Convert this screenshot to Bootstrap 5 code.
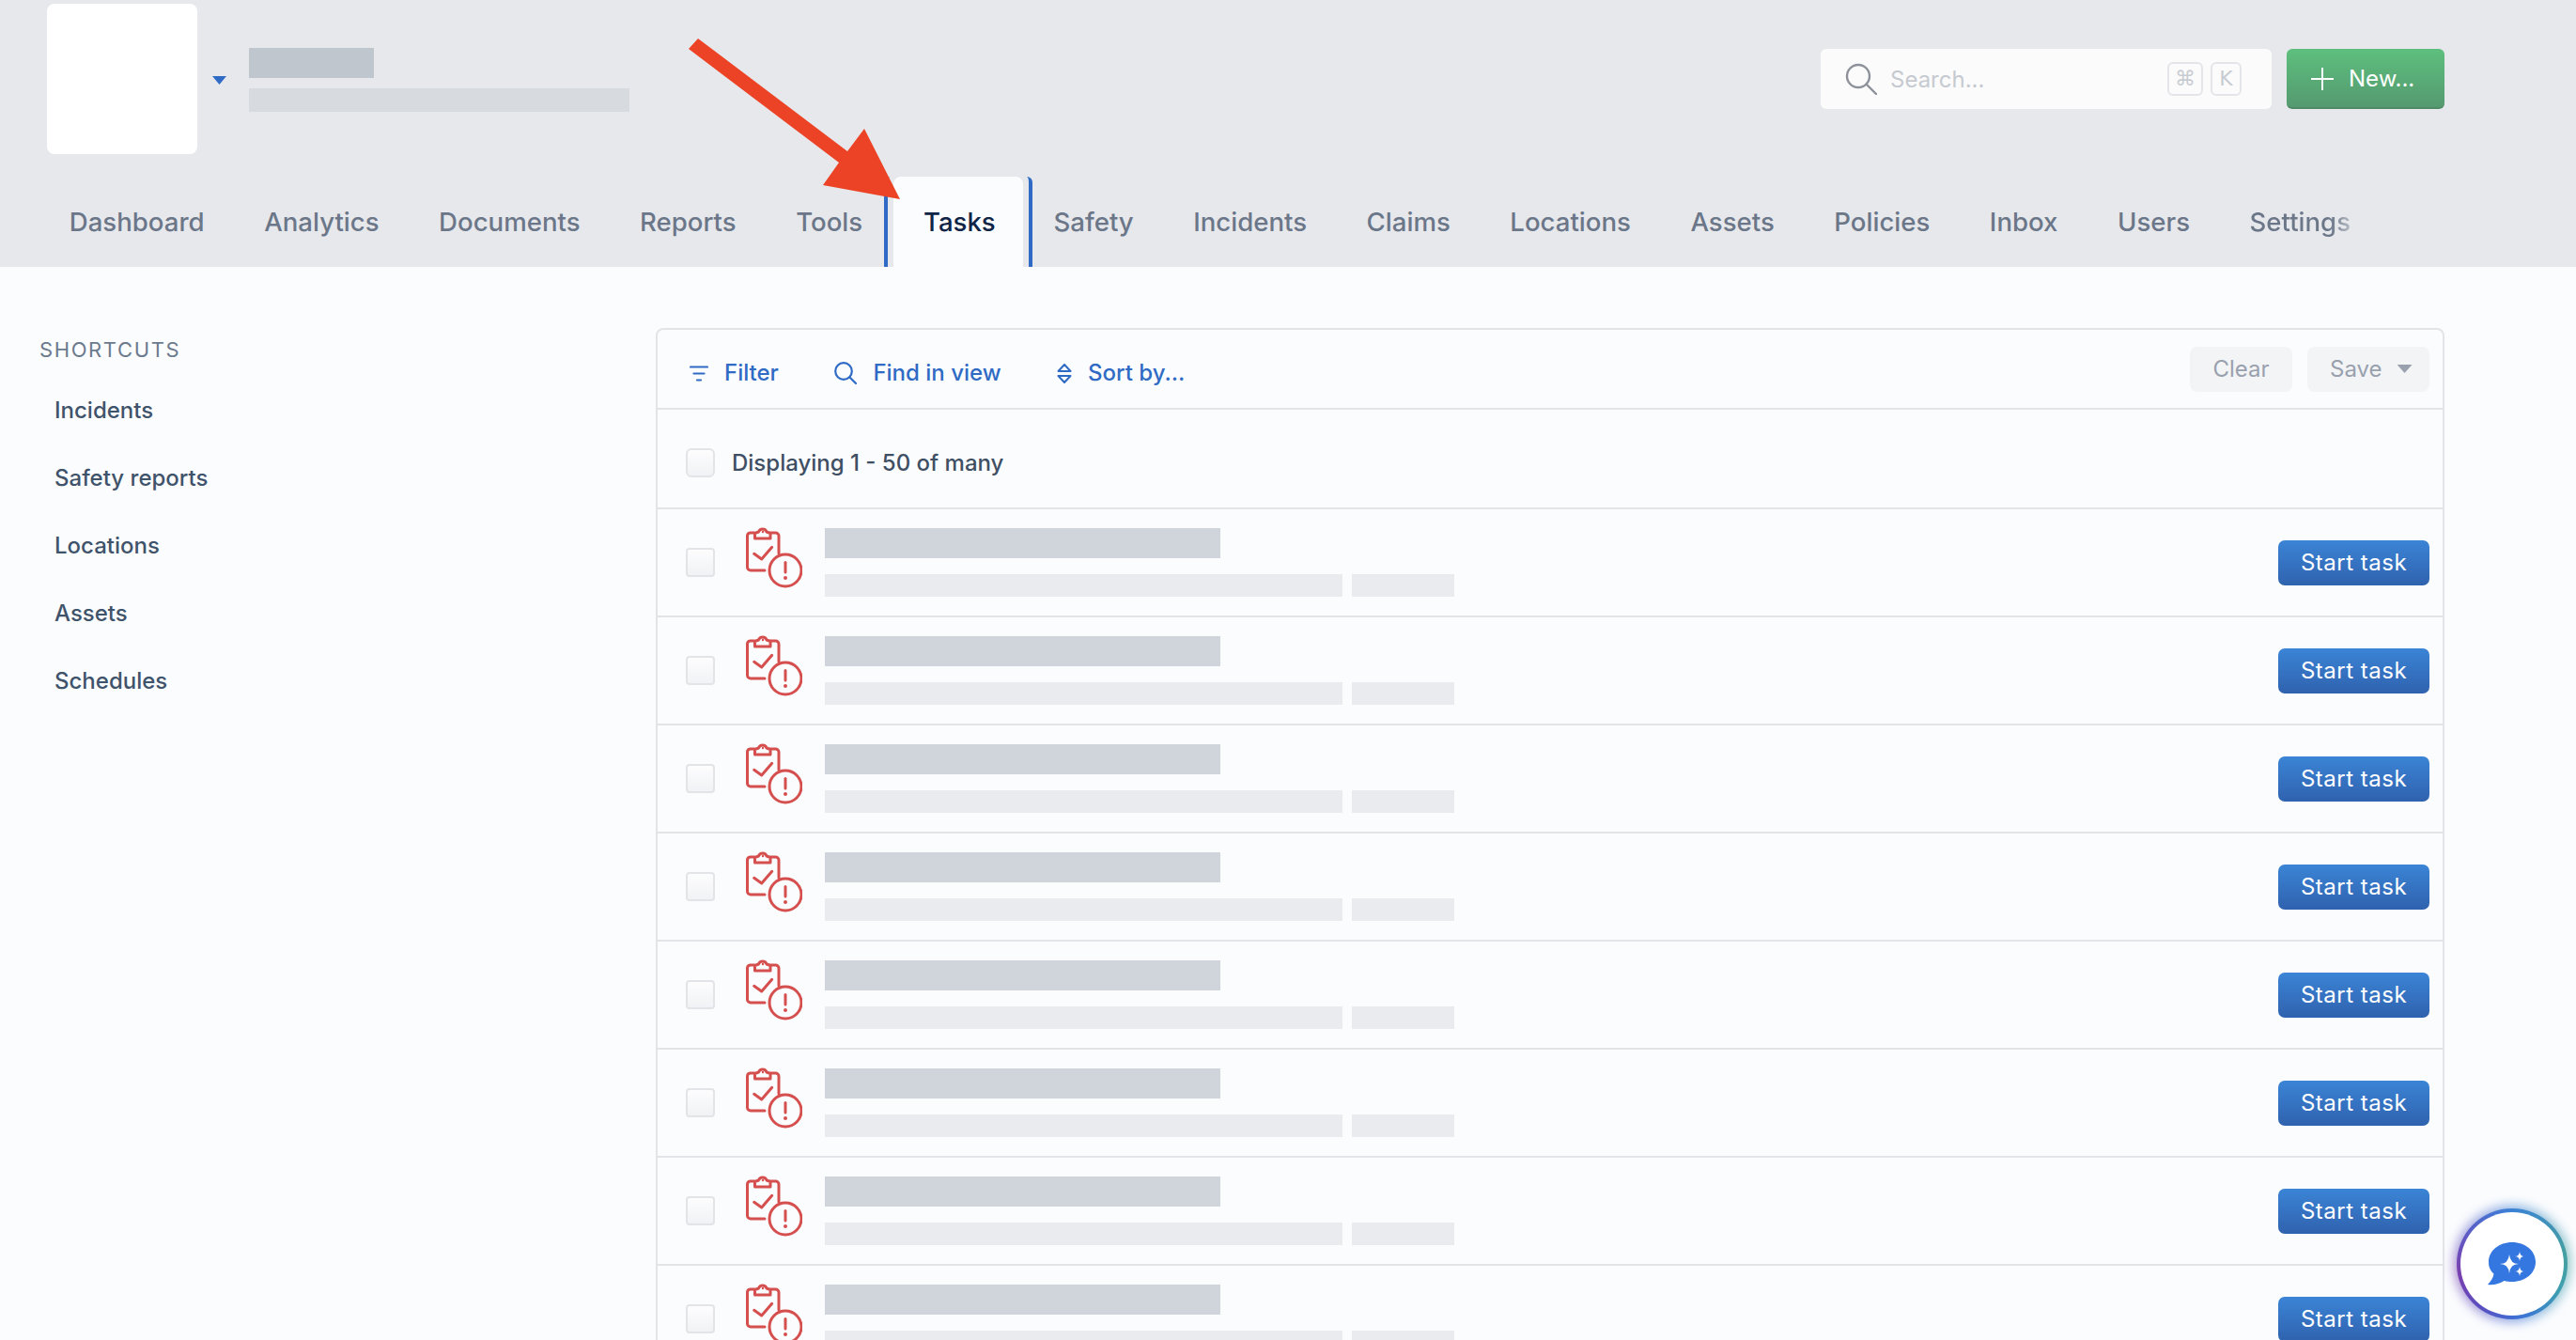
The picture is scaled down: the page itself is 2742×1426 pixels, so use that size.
<!DOCTYPE html>
<html lang="en">
<head>
  <meta charset="UTF-8" />
  <meta name="viewport" content="width=device-width, initial-scale=1" />
  <title>Tasks</title>
  <link href="https://cdn.jsdelivr.net/npm/bootstrap@5.3.0/dist/css/bootstrap.min.css" rel="stylesheet" />
  <style>
    html, body { height: 100%; overflow: hidden; }
    body { background: #fbfcfe; font-family: Inter, "Liberation Sans", sans-serif; color: #3f536b; }

    /* header */
    .top-head { background: #e7e8ec; height: 284px; }
    .brand-row { height: 164px; padding: 4px 140px 0 50px; }
    .logo-box { width: 160px; height: 160px; background: #fff; border-radius: 8px; }
    .logo-caret { width: 15px; height: 9px; margin: 77px 24px 0 16px; background: #2f6bc4; clip-path: polygon(0 0, 100% 0, 50% 100%); }
    .name-stack { padding-top: 47px; }
    .name-bar { width: 133px; height: 32px; background: #bfc6ce; }
    .sub-bar { width: 405px; height: 25px; margin-top: 11px; background: #d7dade; }
    .search-top { margin-top: 48px; }
    .search-box { width: 480px; height: 64px; background: #fbfbfc; border-radius: 6px; padding: 0 32px 0 26px; color: #c6cad0; font-size: 24px; }
    .search-txt { margin: 2px 0 0 14px; }
    .key-cap { height: 36px; min-width: 33px; padding: 0 6px; border: 2px solid #e4e5e8; border-radius: 6px; font-size: 22px; line-height: 32px; text-align: center; font-family: "DejaVu Sans", sans-serif; color: #c8ccd2; }
    .new-btn { width: 168px; height: 64px; margin-left: 16px; padding: 2px 0 0 26px; background: linear-gradient(#5dbf7d, #559a70); border: 0; border-bottom: 2px solid #4d8a65; border-radius: 6px; color: #fff; font-size: 24px; }
    .new-btn:hover { color: #fff; }

    /* tabs */
    .tab-strip { margin: 24px 0 0 43px; height: 96px; gap: 2px; }
    .tab-item { padding: 0 30.75px; font-size: 27.6px; font-weight: 500; line-height: 96px; color: #6b7789; position: relative; text-decoration: none; white-space: nowrap; }
    .tab-item.on { padding: 0 29px 0 32px; background: #fbfcfe; color: #0f2447; border-radius: 8px 8px 0 0; }
    .tab-item.on::before { content: ""; position: absolute; inset: 0 -10px; border: solid #2f6bc4; border-width: 0 4px; border-radius: 6px 6px 0 0; }
    .tab-fade span { background: linear-gradient(90deg, #6b7789 80%, #b7bcc4); -webkit-background-clip: text; background-clip: text; color: transparent; }

    .red-arrow { position: absolute; left: 0; top: 0; width: 1000px; height: 240px; pointer-events: none; }

    /* sidebar */
    .side-col { width: 698px; flex: none; padding: 8px 0 0 42px; }
    .side-label { font-size: 22px; line-height: 30px; letter-spacing: 1.6px; color: #6b7a8d; margin-bottom: 14px; }
    .side-link { padding: 0 0 0 16px; height: 72px; line-height: 72px; font-size: 24px; font-weight: 500; color: #3f536b; text-decoration: none; background: none; border: 0; }

    /* panel */
    .page-body { padding-top: 65px; }
    .task-panel { width: 1904px; flex: none; background: #fbfcfe; border: 2px solid #e2e4e8; border-radius: 8px 8px 0 0; }
    .tool-row { height: 85px; padding: 0 14px 0 34px; border-bottom: 2px solid #e2e4e8; }
    .tool-left { padding-top: 9px; gap: 59.5px; }
    .tool-btn { padding: 0; border: 0; font-size: 24px; font-weight: 500; color: #2f6bc4; gap: 17px; }
    .tool-btn:hover { color: #2f6bc4; }
    .grey-btn { height: 48px; padding: 0; border: 0; border-radius: 8px; background: #f3f4f6; color: #99a1ae; font-size: 24px; }
    .grey-btn:hover { background: #f3f4f6; color: #99a1ae; }
    .clear-btn { width: 109px; }
    .save-btn { width: 130px; padding-left: 24px; }
    .save-caret { width: 16px; height: 9px; margin-left: 16px; background: #99a1ae; clip-path: polygon(0 0, 100% 0, 50% 100%); }
    .count-row { height: 106px; padding: 9px 0 0 30px; border-bottom: 2px solid #e2e4e8; font-size: 24px; font-weight: 500; color: #3f4f63; }
    .pick { width: 31px; height: 31px; margin: 0 18px 0 0; flex: none; border: 2px solid #e2e4e8; border-radius: 6px; background: linear-gradient(#fdfdfe, #f1f2f5); }
    .task-row { height: 115px; padding: 0 14px 0 30px; border: 0; border-bottom: 2px solid #e2e4e8; border-radius: 0; background: none; }
    .task-ic { width: 60px; height: 66px; margin: 0 24px 12px 15px; flex: none; }
    .bar-a { width: 421px; height: 32px; background: #d0d5dc; }
    .bar-b { width: 551px; height: 24px; background: #e9ebee; }
    .bar-c { width: 109px; height: 24px; margin-left: 2px; background: #e9ebee; }
    .bar-wrap { gap: 17px; }
    .start-btn { width: 161px; height: 48px; padding: 1px 0 0; border: 0; border-radius: 7px; background: linear-gradient(#3b84d6, #2f62ae); color: #fff; font-size: 24px; letter-spacing: .5px; }
    .start-btn:hover { color: #fff; }

    /* chat bubble */
    .chat-btn { position: fixed; left: 2615px; top: 1286px; width: 118px; height: 118px; padding: 4px; border: 0; border-radius: 50%; background: conic-gradient(from 0deg, #3b82d6 0deg, #45a0a0 80deg, #3f9fb0 120deg, #3b74d6 170deg, #5a4fc0 215deg, #7a3fb0 260deg, #5a60c8 310deg, #3b82d6 360deg); }
    .chat-btn::before { content: ""; position: absolute; inset: -3px; border-radius: 50%; background: inherit; filter: blur(6px); opacity: .6; z-index: -1; }
    .chat-in { background: #fff; border-radius: 50%; width: 100%; height: 100%; }
  </style>
</head>
<body>

  <svg width="0" height="0" class="position-absolute">
    <symbol id="clip-alert" viewBox="0 0 60 66">
      <g fill="none" stroke="#d64f4f" stroke-width="3" stroke-linecap="round" stroke-linejoin="round">
        <path d="M9 7H4.500A3.500 3.500 0 0 0 1.500 10.500V43.500A3.500 3.500 0 0 0 5 47H20" />
        <path d="M26 7h5.500A3.500 3.500 0 0 1 35 10.500V29" />
        <path d="M9.500 13V7.500l4-1.500a4.500 4.500 0 0 1 8.500 0l4 1.500V13Z" />
        <path d="M8.700 29.300 16.700 35 27.700 22.300" />
        <circle cx="42" cy="47" r="17" />
        <path d="M42 38.500V49" />
      </g>
      <circle cx="42" cy="55" r="2" fill="#d64f4f" />
      <circle cx="18" cy="6" r="1.200" fill="#d64f4f" />
    </symbol>
  </svg>

  <header class="top-head">
    <div class="brand-row d-flex">
      <div class="logo-box"></div>
      <div class="logo-caret"></div>
      <div class="name-stack">
        <div class="name-bar"></div>
        <div class="sub-bar"></div>
      </div>
      <div class="search-top ms-auto d-flex align-items-start">
        <div class="search-box d-flex align-items-center">
          <svg width="34" height="34" viewBox="0 0 34 34" fill="none" stroke="#8d9199" stroke-width="2.400" stroke-linecap="round"><circle cx="14" cy="14" r="12" /><path d="M23 23 33 33" /></svg>
          <span class="search-txt flex-grow-1">Search...</span>
          <span class="key-cap">⌘</span>
          <span class="key-cap ms-2">K</span>
        </div>
        <button class="btn new-btn d-flex align-items-center" type="button">
          <svg width="24" height="24" viewBox="0 0 24 24" stroke="#fff" stroke-width="2"><path d="M12 0V24M0 12H24" /></svg>
          <span class="ms-3">New...</span>
        </button>
      </div>
    </div>
    <nav class="tab-strip d-flex">
      <a class="tab-item" href="#">Dashboard</a>
      <a class="tab-item" href="#">Analytics</a>
      <a class="tab-item" href="#">Documents</a>
      <a class="tab-item" href="#">Reports</a>
      <a class="tab-item" href="#">Tools</a>
      <a class="tab-item on" href="#">Tasks</a>
      <a class="tab-item" href="#">Safety</a>
      <a class="tab-item" href="#">Incidents</a>
      <a class="tab-item" href="#">Claims</a>
      <a class="tab-item" href="#">Locations</a>
      <a class="tab-item" href="#">Assets</a>
      <a class="tab-item" href="#">Policies</a>
      <a class="tab-item" href="#">Inbox</a>
      <a class="tab-item" href="#">Users</a>
      <a class="tab-item tab-fade" href="#"><span>Settings</span></a>
    </nav>
  </header>

  <svg class="red-arrow" viewBox="0 0 1000 240"><polygon fill="#ec4326" points="743,41 902,161 920,137 958,212 876,197 893,173 733,52" /></svg>

  <main class="page-body d-flex">
    <aside class="side-col">
      <div class="side-label">SHORTCUTS</div>
      <div class="list-group">
        <a class="list-group-item side-link" href="#">Incidents</a>
        <a class="list-group-item side-link" href="#">Safety reports</a>
        <a class="list-group-item side-link" href="#">Locations</a>
        <a class="list-group-item side-link" href="#">Assets</a>
        <a class="list-group-item side-link" href="#">Schedules</a>
      </div>
    </aside>

    <section class="task-panel">
      <div class="tool-row d-flex align-items-center justify-content-between">
        <div class="tool-left d-flex align-items-center">
          <button class="btn tool-btn d-flex align-items-center" type="button">
            <svg width="20" height="17" viewBox="0 0 20 17" stroke="#2f6bc4" stroke-width="2.200" stroke-linecap="round"><path d="M1 1.500H19M4.500 8.500H15.500M8 15.500H12" /></svg>
            Filter
          </button>
          <button class="btn tool-btn d-flex align-items-center" type="button">
            <svg width="24" height="24" viewBox="0 0 24 24" fill="none" stroke="#2f6bc4" stroke-width="2.200" stroke-linecap="round"><circle cx="10" cy="10" r="8.800" /><path d="M16.500 16.500 23 23" /></svg>
            Find in view
          </button>
          <button class="btn tool-btn d-flex align-items-center" type="button">
            <svg width="16" height="21" viewBox="0 0 16 21" fill="none" stroke="#2f6bc4" stroke-width="2" stroke-linejoin="round" stroke-linecap="round"><path d="M8 1 14.500 8H1.500ZM1.500 13H14.500L8 20Z" /></svg>
            Sort by...
          </button>
        </div>
        <div class="d-flex gap-3">
          <button class="btn grey-btn clear-btn" type="button">Clear</button>
          <button class="btn grey-btn save-btn d-flex align-items-center" type="button">Save<span class="save-caret"></span></button>
        </div>
      </div>

      <div class="count-row d-flex align-items-center">
        <input class="form-check-input pick" type="checkbox" aria-label="Select all" />
        Displaying 1 - 50 of many
      </div>

      <div class="list-group" id="rows"></div>
    </section>
  </main>

  <button class="chat-btn" type="button" aria-label="Chat">
    <span class="chat-in d-flex align-items-center justify-content-center">
      <svg width="52" height="46" viewBox="0 0 52 46">
        <path fill="#3577e0" d="M26 0C40 0 51 9 51 21S40 42 26 42C23 42 20 41.600 17.500 41 13 44 6 46 0 45 3 42 6 38 6.500 33.500 2.500 30 1 26 1 21 1 9 12 0 26 0Z" />
        <path fill="#fff" d="M23 13Q24 23 33 23 24 23 23 33 22 23 13 23 22 23 23 13ZM34 10Q34.500 15 39 15 34.500 15 34 20 33.500 15 29 15 33.500 15 34 10ZM34 26Q34.500 31 39 31 34.500 31 34 36 33.500 31 29 31 33.500 31 34 26Z" />
      </svg>
    </span>
  </button>

  <script>
    // same row eight times, the last one runs off the page
    const rows = document.getElementById("rows");
    for (let i = 0; i < 8; i++) {
      rows.insertAdjacentHTML("beforeend", `
        <div class="list-group-item task-row d-flex align-items-center">
          <input class="form-check-input pick" type="checkbox" aria-label="Select task" />
          <svg class="task-ic"><use href="#clip-alert" /></svg>
          <div class="bar-wrap d-flex flex-column">
            <div class="bar-a"></div>
            <div class="d-flex gap-2"><div class="bar-b"></div><div class="bar-c"></div></div>
          </div>
          <button class="btn start-btn ms-auto" type="button">Start task</button>
        </div>`);
    }
  </script>

  <script src="https://cdn.jsdelivr.net/npm/bootstrap@5.3.0/dist/js/bootstrap.bundle.min.js"></script>
</body>
</html>
